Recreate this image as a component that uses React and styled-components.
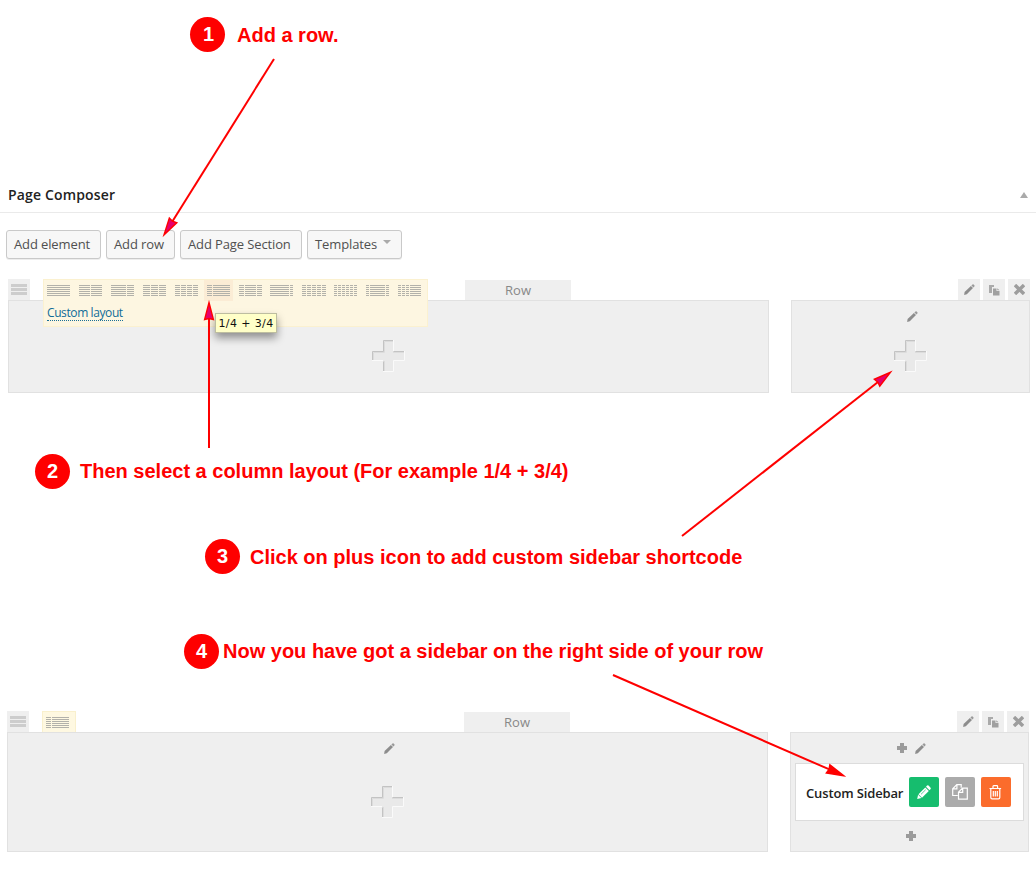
import React from 'react';
import styled, { createGlobalStyle } from 'styled-components';

const GlobalStyle = createGlobalStyle`
  *, *::before, *::after { box-sizing: border-box; }
  body { margin: 0; background: #fff; font-family: 'Open Sans', sans-serif; font-size: 13px; color: #464646; }
  svg { display: block; flex: none; }
`;

const Page = styled.main`
  position: relative;
  display: flex;
  flex-direction: column;
  width: 1036px;
  height: 876px;
  overflow: hidden;
`;

const Step = styled.div`
  display: flex;
  align-items: center;
  gap: ${(p) => p.$gap}px;
  height: 35px;
  margin: ${(p) => p.$top}px 0 0 ${(p) => p.$left}px;
`;

const StepNumber = styled.span`
  flex: none;
  width: 35px;
  height: 35px;
  padding-left: ${(p) => p.$nudge || 0}px;
  border-radius: 50%;
  background: #fe0000;
  color: #fff;
  font: bold 20px/35px 'Liberation Sans', sans-serif;
  text-align: center;
`;

const StepText = styled.span`
  padding-top: ${(p) => p.$drop || 0}px;
  color: #fe0000;
  font: bold 20px/35px 'Liberation Sans', sans-serif;
  white-space: nowrap;
`;

const PanelHeader = styled.header`
  display: flex;
  align-items: center;
  justify-content: space-between;
  height: 36px;
  margin-top: 125px;
  padding: 0 8px;
  border-bottom: 1px solid #eaeaea;
`;

const PanelTitle = styled.h2`
  margin: 0;
  color: #222;
  font-size: 14px;
  font-weight: 600;
  line-height: 20px;
  letter-spacing: 0.16px;
`;

const Toolbar = styled.div`
  display: flex;
  gap: 5px;
  margin: 17px 0 0 6px;
`;

const ToolButton = styled.button`
  display: flex;
  align-items: center;
  width: ${(p) => p.$width}px;
  height: 29px;
  padding: 0 0 1px 7px;
  border: 1px solid #c9c9c9;
  border-radius: 3px;
  background: #f7f7f7;
  box-shadow: 0 1px 0 rgba(0, 0, 0, 0.07);
  color: #505050;
  font: 13px 'Open Sans', sans-serif;
  letter-spacing: -0.12px;
  white-space: nowrap;
`;

const Caret = styled.i`
  margin: -5px 0 0 6px;
  border: 4px solid transparent;
  border-top: 4px solid #aaa;
  border-bottom: 0;
`;

const RowBlock = styled.section`
  width: 1022px;
  margin: ${(p) => p.$top}px 0 0 ${(p) => p.$left}px;
`;

const RowTabs = styled.div`
  display: grid;
  grid-template-columns: 457px 106px 1fr;
  align-items: end;
  height: 21px;
`;

const TabGroup = styled.div`
  display: flex;
  justify-content: ${(p) => (p.$end ? 'flex-end' : 'flex-start')};
  gap: ${(p) => p.$gap}px;
`;

const Tab = styled.span`
  display: grid;
  place-items: center;
  width: 22px;
  height: 21px;
  background: #efefef;
`;

const RowLabel = styled.span`
  height: 20px;
  background: #efefef;
  color: #888;
  text-align: center;
  line-height: 20px;
`;

const LayoutSlot = styled.div`
  position: relative;
  width: 34px;
  height: 21px;
`;

const LayoutTab = styled.span`
  display: flex;
  height: 21px;
  padding: 5px 0 0 3px;
  border: 1px solid #f9f0cd;
  border-bottom: 0;
  background: #fef8e1;
`;

const LayoutMenu = styled.div`
  position: absolute;
  z-index: 2;
  top: 0;
  left: 0;
  width: 385px;
  height: 48px;
  border: 1px solid #fbf1d0;
  background: #fdf6e1;
`;

const LayoutOptions = styled.div`
  display: flex;
`;

const LayoutOption = styled.span`
  width: ${(p) => (p.$active ? 29 : 32)}px;
  margin-right: ${(p) => (p.$active ? 3 : 0)}px;
  height: 21px;
  padding: 5px 0 0 3px;
  background: ${(p) => (p.$active ? '#fbecd5' : 'transparent')};
`;

const CustomLayout = styled.a`
  display: inline-block;
  margin: 4px 0 0 3px;
  border-bottom: 1px dotted #1a6f96;
  color: #106c98;
  font-size: 12px;
  line-height: 15px;
  letter-spacing: -0.4px;
`;

const Tooltip = styled.div`
  position: absolute;
  z-index: 3;
  top: 33px;
  left: 171px;
  width: 62px;
  height: 20px;
  border: 1px solid #bdbda0;
  background: #ffffc8;
  box-shadow: 0 5px 8px rgba(0, 0, 0, 0.4);
  color: #111;
  font: 11px/19px 'DejaVu Sans', sans-serif;
  letter-spacing: 0.4px;
  text-align: center;
  white-space: nowrap;
`;

const Columns = styled.div`
  display: flex;
  gap: 22px;
  height: ${(p) => p.$height}px;
`;

const Column = styled.div`
  display: flex;
  flex-direction: column;
  align-items: center;
  width: ${(p) => p.$width}px;
  border: 1px solid #e1e1e1;
  background: #efefef;
`;

const ColumnControls = styled.div`
  display: flex;
  justify-content: center;
  align-items: center;
  gap: 8px;
  height: 30px;
  padding-left: 3px;
`;

const AddArea = styled.div`
  margin-top: ${(p) => p.$top}px;
`;

const ElementCard = styled.article`
  display: flex;
  align-items: center;
  gap: 6px;
  width: 229px;
  height: 58px;
  padding-left: 10px;
  border: 1px solid #dcdcdc;
  background: #fff;
`;

const ElementName = styled.span`
  width: 97px;
  padding-top: 2px;
  color: #222;
  font-weight: 600;
  letter-spacing: -0.14px;
  white-space: nowrap;
`;

const ElementAction = styled.button`
  display: grid;
  place-items: center;
  flex: none;
  width: 30px;
  height: 30px;
  padding: 0;
  border: 0;
  border-radius: 2px;
  background: ${(p) => p.$color};
`;

const ArrowLayer = styled.svg`
  position: absolute;
  z-index: 5;
  inset: 0;
  pointer-events: none;
`;

function LayoutIcon({ columns }) {
  let x = 0;
  let d = '';
  columns.forEach((w) => {
    for (let y = 0; y < 6; y += 1) d += `M${x} ${y * 2}h${w}v1h-${w}z`;
    x += w + 1;
  });
  return (
    <svg width="25" height="11" shapeRendering="crispEdges">
      <path d={d} fill="#b2b1aa" />
    </svg>
  );
}

function HandleIcon() {
  return (
    <svg width="16" height="12" shapeRendering="crispEdges">
      <path d="M0 0h16v3H0zM0 4h16v3H0zM0 8h16v3H0z" fill="#cdcdcd" />
    </svg>
  );
}

function PencilIcon() {
  return (
    <svg width="11" height="11" viewBox="0 0 11 11">
      <path d="M.1 10.900l.5-2.900L6.900 1.900l2.100 2.100L2.800 10.300z" fill="#8d8d8d" />
      <path d="M7.400 1.400L8.500.4q.6-.4 1.100.1l.8.800q.4.500 0 1.100L9.500 3.500z" fill="#999" />
    </svg>
  );
}

function CopyIcon() {
  return (
    <svg width="11" height="12" viewBox="0 0 11 12">
      <path d="M0 1h5v2H3v6H0z" fill="#aaa" />
      <path d="M4 4.500h3.500v2.500h3v4.500H4zM8.300 4.200L10.500 6.300h-2.200z" fill="#a0a0a0" />
    </svg>
  );
}

function CloseIcon() {
  return (
    <svg width="11" height="11" viewBox="0 0 11 11">
      <path d="M2.200 2.200l6.600 6.600M8.800 2.200L2.200 8.800" stroke="#9d9d9d" strokeWidth="3.400" strokeLinecap="square" />
    </svg>
  );
}

function SmallPlusIcon() {
  return (
    <svg width="10" height="10">
      <path d="M3 0h4v3h3v4H7v3H3V7H0V3h3z" fill="#9b9b9b" />
    </svg>
  );
}

function LargePlusIcon() {
  return (
    <svg width="35" height="35" viewBox="0 0 35 35" fill="none">
      <path d="M12 1h11v11h11v10H23v11H12V22H1V12h11z" fill="#e9e9e9" />
      <path d="M12.500 33V22.500M1.500 22V12.500H12.500V1.500H22M22.500 12.500H33" stroke="#c3c3c3" />
      <path d="M13.500 32V22M2.500 21V13.500H13.500V2.500H22M22 13.500H33" stroke="#dcdcdc" />
      <path d="M22.500 1v11M33.500 12v9.500H22.500V32.500H12M12 21.500H1" stroke="#fafafa" />
    </svg>
  );
}

function EditIcon() {
  return (
    <svg width="16" height="16" viewBox="0 0 16 16">
      <path d="M1.200 15l.9-4.300 3.400 3.300z" fill="#fff" />
      <path d="M2.500 10.200L9.300 3.400l3.500 3.500L6 13.700z" fill="#fff" />
      <path d="M10 2.700l1.100-1.100q.7-.6 1.400 0l2.100 2.100q.6.700 0 1.400l-1.100 1.100z" fill="#fff" />
      <path d="M5 10.300l4.700-4.600" stroke="#16bd6e" strokeWidth=".7" />
    </svg>
  );
}

function DuplicateIcon() {
  return (
    <svg width="16" height="16" viewBox="0 0 16 16" fill="none" stroke="#fff" strokeWidth="1.200">
      <path d="M5.800 11.500H.7V4.800L4.800.7h4.400v3M.7 4.900h4.200V.7" />
      <path d="M6.500 8.200l4-4h4.800v11H6.500zM6.500 8.300h4.200V4.200" />
    </svg>
  );
}

function TrashIcon() {
  return (
    <svg width="14" height="15" viewBox="0 0 14 15" fill="none" stroke="#fff" strokeWidth="1.200">
      <path d="M.5 3.500h11.600M4 3.200V1.500q0-.8.800-.8h3q.8 0 .8.800v1.700" />
      <path d="M1.800 3.700V12.500q0 1.300 1.300 1.300h6.400q1.300 0 1.300-1.300V3.700M4.300 6v5.500M6.300 6v5.500M8.300 6v5.500" />
    </svg>
  );
}

function Arrow({ from, to, fill = '#e6006c' }) {
  const length = Math.hypot(to[0] - from[0], to[1] - from[1]);
  const angle = (Math.atan2(to[1] - from[1], to[0] - from[0]) * 180) / Math.PI;
  return (
    <g transform={`translate(${from[0]} ${from[1]}) rotate(${angle})`}>
      <path d={`M0 0H${length - 17}`} stroke="#fe0000" strokeWidth="2" />
      <path
        d={`M${length - 2} 0L${length - 19} 4.400L${length - 18} 0L${length - 19} -4.400Z`}
        fill={fill}
        stroke="#fe0000"
        strokeWidth="1.400"
      />
    </g>
  );
}

const layouts = [
  [23], [11, 11], [15, 7], [7, 7, 7], [5, 5, 5, 5], [5, 17],
  [5, 11, 5], [19, 3], [4, 4, 4, 4, 4], [3, 3, 3, 3, 3, 3], [3, 15, 3], [3, 3, 3, 11],
];

function RowHeader({ children }) {
  return (
    <RowTabs>
      <TabGroup $gap={13}>
        <Tab><HandleIcon /></Tab>
        <LayoutSlot>{children}</LayoutSlot>
      </TabGroup>
      <RowLabel>Row</RowLabel>
      <TabGroup $end $gap={3}>
        <Tab><PencilIcon /></Tab>
        <Tab><CopyIcon /></Tab>
        <Tab><CloseIcon /></Tab>
      </TabGroup>
    </RowTabs>
  );
}

export default function App() {
  return (
    <Page>
      <GlobalStyle />
      <Step $top={17} $left={190} $gap={12}>
        <StepNumber $nudge={2}>1</StepNumber>
        <StepText $drop={2}>Add a row.</StepText>
      </Step>

      <PanelHeader>
        <PanelTitle>Page Composer</PanelTitle>
        <svg width="8" height="6"><path d="M4 0l4 6H0z" fill="#aaa" /></svg>
      </PanelHeader>

      <Toolbar>
        <ToolButton $width={95}>Add element</ToolButton>
        <ToolButton $width={69}>Add row</ToolButton>
        <ToolButton $width={122}>Add Page Section</ToolButton>
        <ToolButton $width={95}>Templates<Caret /></ToolButton>
      </Toolbar>

      <RowBlock $top={20} $left={8}>
        <RowHeader>
          <LayoutMenu>
            <LayoutOptions>
              {layouts.map((columns, i) => (
                <LayoutOption key={i} $active={i === 5}><LayoutIcon columns={columns} /></LayoutOption>
              ))}
            </LayoutOptions>
            <CustomLayout>Custom layout</CustomLayout>
            <Tooltip>1/4 + 3/4</Tooltip>
          </LayoutMenu>
        </RowHeader>
        <Columns $height={93}>
          <Column $width={761}>
            <ColumnControls />
            <AddArea $top={8}><LargePlusIcon /></AddArea>
          </Column>
          <Column $width={239}>
            <ColumnControls><PencilIcon /></ColumnControls>
            <AddArea $top={8}><LargePlusIcon /></AddArea>
          </Column>
        </Columns>
      </RowBlock>

      <Step $top={61} $left={35} $gap={10}>
        <StepNumber>2</StepNumber>
        <StepText>Then select a column layout (For example 1/4 + 3/4)</StepText>
      </Step>
      <Step $top={50} $left={205} $gap={10}>
        <StepNumber>3</StepNumber>
        <StepText $drop={2}>Click on plus icon to add custom sidebar shortcode</StepText>
      </Step>
      <Step $top={60} $left={184} $gap={4}>
        <StepNumber>4</StepNumber>
        <StepText>Now you have got a sidebar on the right side of your row</StepText>
      </Step>

      <RowBlock $top={42} $left={7}>
        <RowHeader>
          <LayoutTab><LayoutIcon columns={[5, 17]} /></LayoutTab>
        </RowHeader>
        <Columns $height={120}>
          <Column $width={761}>
            <ColumnControls><PencilIcon /></ColumnControls>
            <AddArea $top={22}><LargePlusIcon /></AddArea>
          </Column>
          <Column $width={239}>
            <ColumnControls><SmallPlusIcon /><PencilIcon /></ColumnControls>
            <ElementCard>
              <ElementName>Custom Sidebar</ElementName>
              <ElementAction $color="#16bd6e"><EditIcon /></ElementAction>
              <ElementAction $color="#ababab"><DuplicateIcon /></ElementAction>
              <ElementAction $color="#fb6c2c"><TrashIcon /></ElementAction>
            </ElementCard>
            <ColumnControls><SmallPlusIcon /></ColumnControls>
          </Column>
        </Columns>
      </RowBlock>

      <ArrowLayer width="1036" height="876">
        <Arrow from={[274, 59]} to={[163, 236.500]} />
        <Arrow from={[209, 448]} to={[209, 300.500]} />
        <Arrow from={[682, 536]} to={[892, 371]} />
        <Arrow from={[613, 675]} to={[845.500, 776.500]} fill="#fe0000" />
      </ArrowLayer>
    </Page>
  );
}
